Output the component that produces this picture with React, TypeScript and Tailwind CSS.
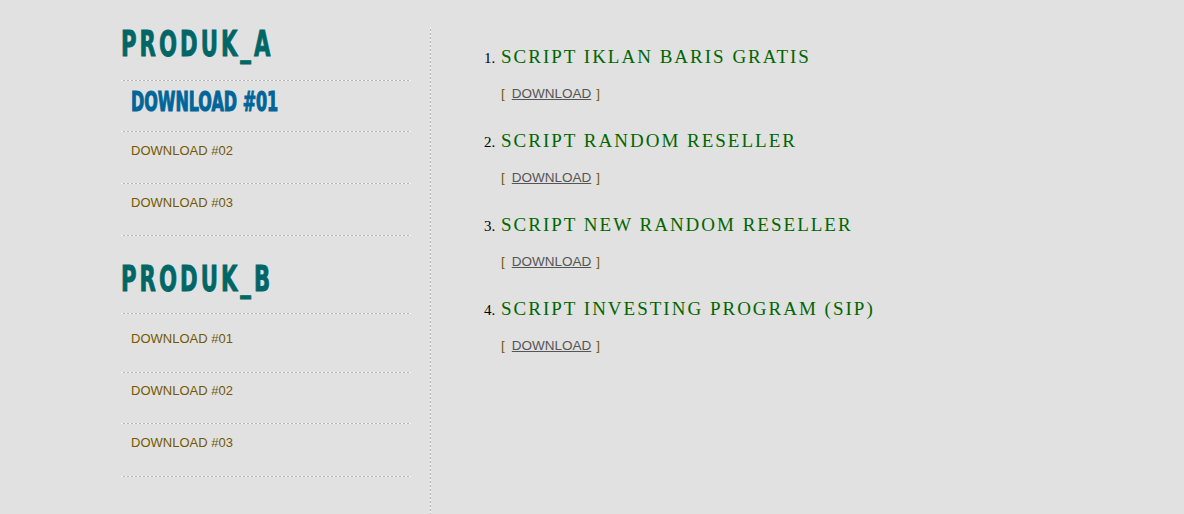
import React from "react";

const impact = "font-['Impact','Liberation_Sans_Narrow','DejaVu_Sans_Condensed',sans-serif]";

function HLine() {
  return <div className="h-px w-full bg-[repeating-linear-gradient(90deg,#f6f6f6_0px,#f6f6f6_2px,#b4b4b4_2px,#b4b4b4_4px)]" />;
}

function SmallLink({ label, h, pt }: { label: string; h: string; pt: string }) {
  return (
    <div className={`${h} ${pt} pl-[10px]`}>
      <a href="#" className="font-['Liberation_Sans',Arial,sans-serif] text-[13px] leading-[16px] text-[#735900] no-underline">
        {label}
      </a>
    </div>
  );
}

function Heading({ text }: { text: string }) {
  return (
    <div className={`${impact} font-bold text-[#006666] text-[31px] leading-[36px] tracking-[4px] scale-x-[0.76] origin-left scale-y-[1.12] whitespace-nowrap [-webkit-text-stroke:0.8px_#006666]`}>
      {text}
    </div>
  );
}

const items = [
  "SCRIPT IKLAN BARIS GRATIS",
  "SCRIPT RANDOM RESELLER",
  "SCRIPT NEW RANDOM RESELLER",
  "SCRIPT INVESTING PROGRAM (SIP)",
];

export default function App() {
  return (
    <div className="min-h-[514px] w-[1184px] bg-[#e1e1e1] flex">
      <div className="w-[290px] ml-[121px] pt-[26px]">
        <div className="h-[54px]"><Heading text="PRODUK_A" /></div>
        <HLine />
        <div className="h-[50px] pt-[7px] pl-[10px]">
          <span className={`${impact} font-bold text-[#006699] text-[25px] leading-[30px] inline-block scale-x-[0.71] origin-left scale-y-[1.05] whitespace-nowrap [-webkit-text-stroke:1px_#006699]`}>
            DOWNLOAD #01
          </span>
        </div>
        <HLine />
        <SmallLink label="DOWNLOAD #02" h="h-[51px]" pt="pt-[5px]" />
        <HLine />
        <SmallLink label="DOWNLOAD #03" h="h-[51px]" pt="pt-[5px]" />
        <HLine />
        <div className="h-[77px] pt-[25px]"><Heading text="PRODUK_B" /></div>
        <HLine />
        <SmallLink label="DOWNLOAD #01" h="h-[58px]" pt="pt-[11px]" />
        <HLine />
        <SmallLink label="DOWNLOAD #02" h="h-[50px]" pt="pt-[4px]" />
        <HLine />
        <SmallLink label="DOWNLOAD #03" h="h-[52px]" pt="pt-[5px]" />
        <HLine />
      </div>
      <div className="ml-[19px] mt-[27px] w-px self-stretch bg-[repeating-linear-gradient(180deg,#f6f6f6_0px,#f6f6f6_2px,#b4b4b4_2px,#b4b4b4_4px)]" />
      <div className="pl-[53px] pt-[45px]">
        {items.map((t, i) => (
          <div key={t} className="h-[84px]">
            <div className="flex items-baseline">
              <span className="font-['Liberation_Serif','Times_New_Roman',serif] text-[15px] text-black w-[17px]">{i + 1}.</span>
              <span className="font-['Liberation_Serif','Times_New_Roman',serif] text-[19px] leading-[24px] tracking-[2px] text-[#006600]">{t}</span>
            </div>
            <div className="mt-[16px] ml-[17px] font-['Liberation_Sans',Arial,sans-serif] text-[13.5px] leading-[16px] text-[#735900]">
              [<a href="#" className="text-[#555555] underline ml-[7px] mr-[5px]">DOWNLOAD</a>]
            </div>
          </div>
        ))}
      </div>
    </div>
  );
}
